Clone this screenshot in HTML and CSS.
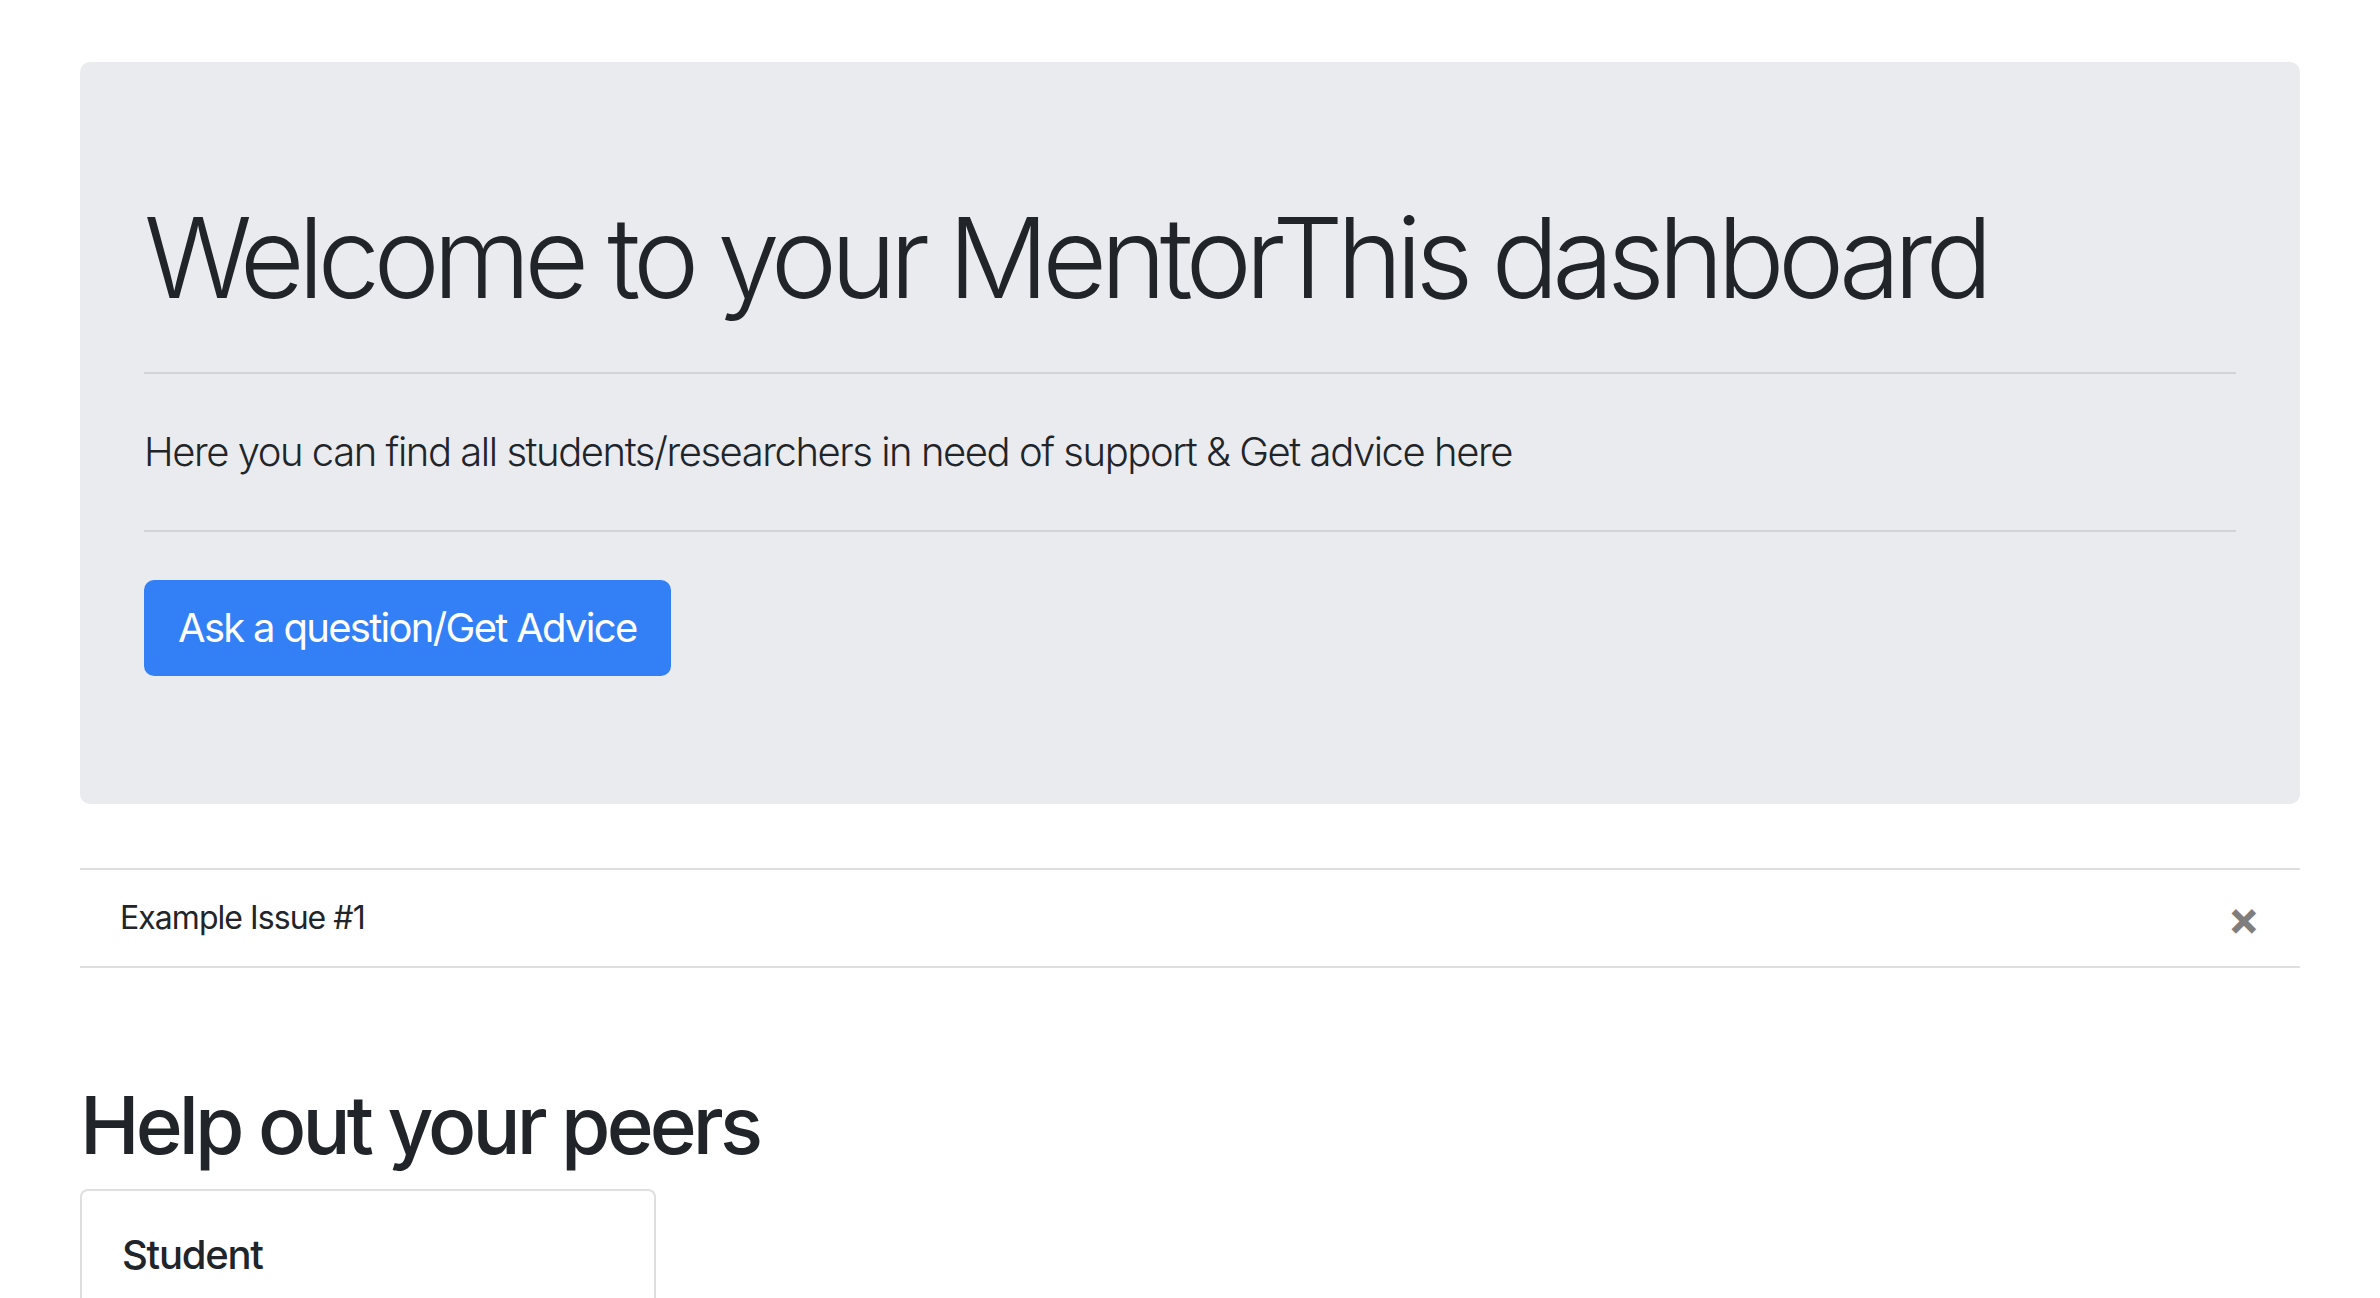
FILE: index.html
```html
<!DOCTYPE html>
<html lang="en">
<head>
<meta charset="utf-8">
<title>MentorThis dashboard</title>
<link rel="stylesheet" href="styles.css">
</head>
<body>
<div class="container">
  <div class="jumbotron">
    <h1 class="display-title">Welcome to your MentorThis dashboard</h1>
    <hr class="divider">
    <p class="lead">Here you can find all students/researchers in need of support &amp; Get advice here</p>
    <hr class="divider">
    <a class="btn-primary" href="#">Ask a question/Get Advice</a>
  </div>

  <ul class="issue-list">
    <li class="issue-item">
      <span class="issue-name">Example Issue #1</span>
      <button class="close-btn" type="button" aria-label="Close">×</button>
    </li>
  </ul>

  <section class="peers">
    <h2 class="peers-title">Help out your peers</h2>
    <div class="card">
      <div class="card-body">
        <h5 class="card-title">Student</h5>
      </div>
    </div>
  </section>
</div>
</body>
</html>
```
FILE: styles.css
```css
html, body {
  margin: 0;
  padding: 0;
  background: #ffffff;
}

body {
  font-family: Inter, "Noto Sans", "Liberation Sans", sans-serif;
  color: #212529;
  font-size: 32px;
  line-height: 1.5;
}

.container {
  max-width: 2220px;
  margin: 0 auto;
  padding: 62px 0 0;
}

.jumbotron {
  background: #eaebef;
  border-radius: 10px;
  padding: 128px 64px;
  margin-bottom: 64px;
}

.display-title {
  font-size: 112px;
  font-weight: 300;
  line-height: 1.2;
  margin: 0;
  letter-spacing: -6.7px;
}

.divider {
  border: 0;
  border-top: 2px solid rgba(0, 0, 0, 0.1);
  margin: 48px 0;
  height: 0;
}

.lead {
  font-size: 40px;
  font-weight: 300;
  line-height: 1.5;
  margin: 0 0 32px;
  letter-spacing: -1.45px;
}

.btn-primary {
  display: inline-block;
  background: #3380f6;
  border: 2px solid #3380f6;
  color: #ffffff;
  font-size: 40px;
  font-weight: 400;
  line-height: 1.5;
  padding: 16px 32px;
  border-radius: 10px;
  text-decoration: none;
  letter-spacing: -1.7px;
}

.issue-list {
  list-style: none;
  margin: 0;
  padding: 0;
}

.issue-item {
  display: flex;
  align-items: center;
  justify-content: space-between;
  padding: 24px 40px;
  border-top: 2px solid rgba(0, 0, 0, 0.125);
  border-bottom: 2px solid rgba(0, 0, 0, 0.125);
  font-size: 32px;
  line-height: 48px;
}

.issue-name {
  letter-spacing: -0.95px;
}

.close-btn {
  background: transparent;
  border: 0;
  padding: 0;
  font-family: Inter, "Noto Sans", sans-serif;
  font-size: 48px;
  font-weight: 700;
  line-height: 1;
  color: #000;
  opacity: 0.5;
  text-shadow: 0 2px 0 #fff;
}

.peers {
  margin-top: 109px;
}

.peers-title {
  font-size: 80px;
  font-weight: 500;
  line-height: 1.2;
  margin: 0 0 16px;
  letter-spacing: -3.9px;
}

.card {
  width: 576px;
  box-sizing: border-box;
  border: 2px solid rgba(0, 0, 0, 0.125);
  border-radius: 8px;
  background: #fff;
}

.card-body {
  padding: 40px;
}

.card-title {
  font-size: 40px;
  font-weight: 500;
  line-height: 1.2;
  margin: 0 0 24px;
  letter-spacing: -1.25px;
}
```
